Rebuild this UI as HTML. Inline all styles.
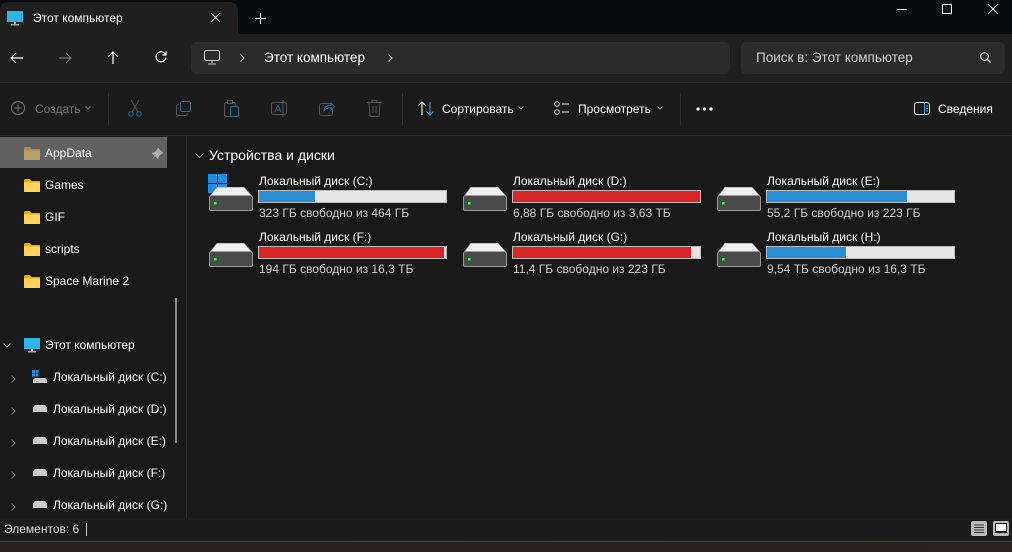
<!DOCTYPE html>
<html><head><meta charset="utf-8"><style>
*{margin:0;padding:0;box-sizing:border-box}
body{width:1012px;height:552px;overflow:hidden;background:#191919;font-family:"Segoe UI","Liberation Sans",sans-serif;color:#fff;font-size:12px;position:relative}
.a{position:absolute}
.t{white-space:nowrap}
svg{position:absolute;overflow:visible}
.bar{position:absolute;height:13px;width:189px;background:#e6e6e6;border:1px solid #bbb}
.bar i{display:block;height:100%}
.b{background:#2a8fd6}.r{background:#d82626}
.lbl{font-size:12px;color:#fff}
.sub{font-size:12px;color:#cfcfcf}
.sb{top:1px}
</style></head><body>
<div class="a" style="left:0;top:0;width:1012px;height:34px;background:#060b0d"></div>
<div class="a" style="left:0;top:2px;width:238px;height:32px;background:#1f1f1f;border-radius:8px 8px 0 0"></div>
<svg style="left:7px;top:11px" width="17" height="15"><rect x="0" y="0" width="16" height="11" fill="#2bb5e8"/><rect x="7" y="11" width="2" height="2" fill="#aaa"/><rect x="4" y="13" width="8" height="1.5" fill="#aaa"/></svg>
<div class="a t" style="left:33px;top:11px;font-size:12px">Этот компьютер</div>
<svg style="left:211px;top:13px" width="10" height="10"><path d="M0 0L9 9M9 0L0 9" stroke="#ddd" stroke-width="1.2"/></svg>
<svg style="left:255px;top:13px" width="11" height="11"><path d="M5.5 0V11M0 5.5H11" stroke="#ddd" stroke-width="1.2"/></svg>
<svg style="left:897px;top:9px" width="10" height="2"><path d="M0 0.5H10" stroke="#fff"/></svg>
<svg style="left:942px;top:4px" width="10" height="10"><rect x="0.5" y="0.5" width="9" height="9" fill="none" stroke="#fff"/></svg>
<svg style="left:988px;top:4px" width="10" height="10"><path d="M0 0L10 10M10 0L0 10" stroke="#fff"/></svg>
<div class="a" style="left:0;top:34px;width:1012px;height:48px;background:#1f1f1f"></div>
<svg style="left:10px;top:52px" width="14" height="12"><path d="M13 6H1M6 1L1 6L6 11" stroke="#fff" fill="none" stroke-width="1.2"/></svg>
<svg style="left:58px;top:52px" width="14" height="12"><path d="M1 6H13M8 1L13 6L8 11" stroke="#777" fill="none" stroke-width="1.2"/></svg>
<svg style="left:107px;top:51px" width="12" height="14"><path d="M6 13V1M1 6L6 1L11 6" stroke="#fff" fill="none" stroke-width="1.2"/></svg>
<svg style="left:155px;top:51px" width="12" height="12"><path d="M10.5 3.5A5 5 0 1 0 11 6.5M11 0.5V4H7.5" stroke="#fff" fill="none" stroke-width="1.2"/></svg>
<div class="a" style="left:191px;top:42px;width:539px;height:32px;background:#2b2b2b;border-radius:5px"></div>
<svg style="left:204px;top:50px" width="16" height="15"><rect x="0.5" y="0.5" width="15" height="10" rx="2" fill="none" stroke="#ccc" stroke-width="1.1"/><path d="M8 11V13M4 14H12" stroke="#ccc" stroke-width="1.1"/></svg>
<svg style="left:240px;top:54px" width="5" height="8"><path d="M0.5 0.5L4 4L0.5 7.5" stroke="#ddd" fill="none"/></svg>
<div class="a t" style="left:264px;top:50px;font-size:13.5px">Этот компьютер</div>
<svg style="left:388px;top:54px" width="5" height="8"><path d="M0.5 0.5L4 4L0.5 7.5" stroke="#ddd" fill="none"/></svg>
<div class="a" style="left:741px;top:42px;width:264px;height:32px;background:#2b2b2b;border-radius:5px"></div>
<div class="a t" style="left:756px;top:50px;font-size:13.5px;color:#cfcfcf">Поиск в: Этот компьютер</div>
<svg style="left:980px;top:52px" width="11" height="11"><circle cx="4.5" cy="4.5" r="3.8" fill="none" stroke="#ddd" stroke-width="1.2"/><path d="M7.3 7.3L10.5 10.5" stroke="#ddd" stroke-width="1.3"/></svg>
<div class="a" style="left:0;top:82px;width:1012px;height:1px;background:#2d2d2d"></div>
<div class="a" style="left:0;top:83px;width:1012px;height:52px;background:#1b1b1b"></div>
<div class="a" style="left:0;top:135px;width:1012px;height:1px;background:#2d2d2d"></div>
<svg style="left:11px;top:101px" width="14" height="14"><circle cx="7" cy="7" r="6.5" fill="none" stroke="#777"/><path d="M7 3.5V10.5M3.5 7H10.5" stroke="#777"/></svg>
<div class="a t" style="left:35px;top:102px;color:#777">Создать</div>
<svg style="left:85px;top:106px" width="6" height="4"><path d="M0.5 0.5L3 3L5.5 0.5" stroke="#777" fill="none"/></svg>
<div class="a" style="left:108px;top:93px;width:1px;height:32px;background:#2e2e2e"></div>
<svg style="left:128px;top:100px" width="14" height="17"><path d="M3 0L10 12M11 0L4 12" stroke="#555" fill="none"/><circle cx="3" cy="14" r="2.3" fill="none" stroke="#2a6b96"/><circle cx="11" cy="14" r="2.3" fill="none" stroke="#2a6b96"/></svg>
<svg style="left:176px;top:101px" width="15" height="15"><rect x="4.5" y="0.5" width="10" height="10" rx="2" fill="none" stroke="#2a6b96"/><path d="M2.5 3.5A2 2 0 0 0 0.5 5.5V12.5A2 2 0 0 0 2.5 14.5H9.5A2 2 0 0 0 11.5 12.5" fill="none" stroke="#555"/></svg>
<svg style="left:224px;top:100px" width="15" height="17"><rect x="0.5" y="2.5" width="11" height="14" rx="2" fill="none" stroke="#555"/><rect x="3.5" y="0.5" width="5" height="3" fill="#1b1b1b" stroke="#555"/><rect x="6.5" y="6.5" width="8" height="10" rx="1.5" fill="#1b1b1b" stroke="#2a6b96"/></svg>
<svg style="left:271px;top:100px" width="17" height="17"><rect x="0.5" y="2.5" width="15" height="12" rx="2" fill="none" stroke="#555"/><path d="M4 12L7 5L10 12M5 10H9" stroke="#2a6b96" fill="none"/><path d="M12 0V17" stroke="#555"/></svg>
<svg style="left:319px;top:100px" width="16" height="16"><rect x="0.5" y="3.5" width="13" height="12" rx="2" fill="none" stroke="#555"/><path d="M5 11C5 7 8 5.5 12 5.5V3L15.5 6.5L12 10V7.5C9 7.5 6.5 8.5 5 11Z" fill="#1b1b1b" stroke="#2a6b96"/></svg>
<svg style="left:367px;top:100px" width="15" height="17"><path d="M0 2.5H15M5 2.5V0.5H10V2.5M2 2.5L3 16.5H12L13 2.5M6 6V13M9 6V13" stroke="#555" fill="none"/></svg>
<div class="a" style="left:402px;top:93px;width:1px;height:32px;background:#2e2e2e"></div>
<svg style="left:418px;top:101px" width="16" height="15"><path d="M4 14V1M0.5 4.5L4 1L7.5 4.5" stroke="#fff" fill="none" stroke-width="1.1"/><path d="M12 1V14M8.5 10.5L12 14L15.5 10.5" stroke="#3aa0e8" fill="none" stroke-width="1.1"/></svg>
<div class="a t" style="left:442px;top:102px">Сортировать</div>
<svg style="left:518px;top:106px" width="6" height="4"><path d="M0.5 0.5L3 3L5.5 0.5" stroke="#aaa" fill="none"/></svg>
<svg style="left:554px;top:101px" width="16" height="14"><circle cx="3" cy="3" r="2.3" fill="none" stroke="#ddd"/><circle cx="3" cy="11" r="2.3" fill="none" stroke="#ddd"/><path d="M8 3H15M8 11H15" stroke="#ddd"/></svg>
<div class="a t" style="left:578px;top:102px">Просмотреть</div>
<svg style="left:657px;top:106px" width="6" height="4"><path d="M0.5 0.5L3 3L5.5 0.5" stroke="#aaa" fill="none"/></svg>
<div class="a" style="left:680px;top:93px;width:1px;height:32px;background:#2e2e2e"></div>
<svg style="left:696px;top:107px" width="18" height="4"><circle cx="2" cy="2" r="1.6" fill="#fff"/><circle cx="8.5" cy="2" r="1.6" fill="#fff"/><circle cx="15" cy="2" r="1.6" fill="#fff"/></svg>
<svg style="left:914px;top:102px" width="16" height="13"><rect x="0.5" y="0.5" width="15" height="12" rx="2.5" fill="none" stroke="#ddd"/><path d="M10.5 0.5V12.5" stroke="#3aa0e8"/><path d="M12 4H14M12 6.5H14M12 9H14" stroke="#3aa0e8"/></svg>
<div class="a t" style="left:938px;top:102px">Сведения</div>
<div class="a" style="left:0;top:137px;width:167px;height:31px;background:#616161"></div>
<div class="a" style="left:186px;top:136px;width:1px;height:382px;background:#2a2a2a"></div>
<div class="a" style="left:175px;top:298px;width:2px;height:145px;background:#888"></div>
<div class="a" style="left:0;top:1px;width:200px;height:520px">
<svg style="left:24px;top:146px" width="16" height="13"><path d="M0 1.5Q0 0 1.5 0H6L7.5 2H16V13H0Z" fill="#a88d4c"/><rect x="0" y="3.5" width="16" height="9.5" rx="1" fill="#b9a268"/></svg>
<div class="a t" style="left:45px;top:145px">AppData</div>
<svg style="left:152px;top:147px" width="11" height="11"><path d="M6 0L11 5L9 6L6.5 8.5L6 11L0 5L2.5 4.5L5 2Z M3 8L0 11" fill="#aaa" stroke="#aaa" stroke-width="0.5"/></svg>
<svg style="left:24px;top:178px" width="16" height="13"><path d="M0 1.5Q0 0 1.5 0H6L7.5 2H16V13H0Z" fill="#e6a914"/><rect x="0" y="3.5" width="16" height="9.5" rx="1" fill="#ffd35c"/></svg>
<div class="a t" style="left:45px;top:177px">Games</div>
<svg style="left:24px;top:210px" width="16" height="13"><path d="M0 1.5Q0 0 1.5 0H6L7.5 2H16V13H0Z" fill="#e6a914"/><rect x="0" y="3.5" width="16" height="9.5" rx="1" fill="#ffd35c"/></svg>
<div class="a t" style="left:45px;top:209px">GIF</div>
<svg style="left:24px;top:242px" width="16" height="13"><path d="M0 1.5Q0 0 1.5 0H6L7.5 2H16V13H0Z" fill="#e6a914"/><rect x="0" y="3.5" width="16" height="9.5" rx="1" fill="#ffd35c"/></svg>
<div class="a t" style="left:45px;top:241px">scripts</div>
<svg style="left:24px;top:274px" width="16" height="13"><path d="M0 1.5Q0 0 1.5 0H6L7.5 2H16V13H0Z" fill="#e6a914"/><rect x="0" y="3.5" width="16" height="9.5" rx="1" fill="#ffd35c"/></svg>
<div class="a t" style="left:45px;top:273px">Space Marine 2</div>
<svg style="left:3px;top:342px" width="8" height="5"><path d="M0.5 0.5L4 4L7.5 0.5" stroke="#aaa" fill="none"/></svg>
<svg style="left:24px;top:337px" width="17" height="15"><rect x="0" y="0" width="16" height="11" fill="#2bb5e8"/><rect x="7" y="11" width="2" height="2" fill="#aaa"/><rect x="4" y="13" width="8" height="1.5" fill="#aaa"/></svg>
<div class="a t" style="left:45px;top:337px">Этот компьютер</div>
</div>
<div class="a" style="left:0;top:370px">
<svg style="left:11px;top:5px" width="5" height="8"><path d="M0.5 0.5L4 4L0.5 7.5" stroke="#888" fill="none"/></svg>
<svg style="left:32px;top:0px" width="16" height="14"><rect x="0" y="0" width="3" height="3" fill="#2a8fd6"/><rect x="3.5" y="0" width="3" height="3" fill="#2a8fd6"/><rect x="0" y="3.5" width="3" height="3" fill="#2a8fd6"/><rect x="3.5" y="3.5" width="3" height="3" fill="#2a8fd6"/><path d="M3 8H13L15 10V13H1V10Z" fill="#ccc"/><rect x="4" y="11" width="1.5" height="1" fill="#3c3"/></svg>
<div class="a t" style="left:53px;top:0px">Локальный диск (C:)</div></div>
<div class="a" style="left:0;top:402px">
<svg style="left:11px;top:5px" width="5" height="8"><path d="M0.5 0.5L4 4L0.5 7.5" stroke="#888" fill="none"/></svg>
<svg style="left:32px;top:3px" width="16" height="8"><path d="M3 0H13L15 2.5V7H1V2.5Z" fill="#ccc"/><rect x="3" y="4.5" width="1.5" height="1" fill="#3c3"/></svg>
<div class="a t" style="left:53px;top:0px">Локальный диск (D:)</div></div>
<div class="a" style="left:0;top:434px">
<svg style="left:11px;top:5px" width="5" height="8"><path d="M0.5 0.5L4 4L0.5 7.5" stroke="#888" fill="none"/></svg>
<svg style="left:32px;top:3px" width="16" height="8"><path d="M3 0H13L15 2.5V7H1V2.5Z" fill="#ccc"/><rect x="3" y="4.5" width="1.5" height="1" fill="#3c3"/></svg>
<div class="a t" style="left:53px;top:0px">Локальный диск (E:)</div></div>
<div class="a" style="left:0;top:466px">
<svg style="left:11px;top:5px" width="5" height="8"><path d="M0.5 0.5L4 4L0.5 7.5" stroke="#888" fill="none"/></svg>
<svg style="left:32px;top:3px" width="16" height="8"><path d="M3 0H13L15 2.5V7H1V2.5Z" fill="#ccc"/><rect x="3" y="4.5" width="1.5" height="1" fill="#3c3"/></svg>
<div class="a t" style="left:53px;top:0px">Локальный диск (F:)</div></div>
<div class="a" style="left:0;top:498px">
<svg style="left:11px;top:5px" width="5" height="8"><path d="M0.5 0.5L4 4L0.5 7.5" stroke="#888" fill="none"/></svg>
<svg style="left:32px;top:3px" width="16" height="8"><path d="M3 0H13L15 2.5V7H1V2.5Z" fill="#ccc"/><rect x="3" y="4.5" width="1.5" height="1" fill="#3c3"/></svg>
<div class="a t" style="left:53px;top:0px">Локальный диск (G:)</div></div>
<svg style="left:195px;top:153px" width="9" height="5"><path d="M0.5 0.5L4.5 4.5L8.5 0.5" stroke="#aaa" fill="none"/></svg>
<div class="a t" style="left:209px;top:147px;font-size:14px">Устройства и диски</div>
<div class="a" style="left:208px;top:174px;width:240px;height:50px">
<svg style="left:0;top:0" width="20" height="20"><rect x="0" y="0" width="9" height="9" fill="#1e8fe0"/><rect x="10" y="0" width="9" height="9" fill="#1e8fe0"/><rect x="0" y="10" width="9" height="9" fill="#1e8fe0"/><rect x="10" y="10" width="9" height="9" fill="#1e8fe0"/></svg>
<svg style="left:1px;top:13px" width="44" height="24"><path d="M8 0.5H35L43.5 10V22A1.5 1.5 0 0 1 42 23.5H2A1.5 1.5 0 0 1 0.5 22V10Z" fill="#4a4a4a" stroke="#999"/><path d="M8 0.5H35L42 8.5H2Z" fill="#f0f0f0"/><rect x="5" y="15" width="2.5" height="2.5" fill="#3f3"/></svg>
<div class="a t lbl" style="left:51px;top:0px">Локальный диск (C:)</div>
<div class="bar" style="left:50px;top:16px"><i class="b" style="width:30%"></i></div>
<div class="a t sub" style="left:51px;top:32px">323 ГБ свободно из 464 ГБ</div></div>
<div class="a" style="left:462px;top:174px;width:240px;height:50px">
<svg style="left:1px;top:13px" width="44" height="24"><path d="M8 0.5H35L43.5 10V22A1.5 1.5 0 0 1 42 23.5H2A1.5 1.5 0 0 1 0.5 22V10Z" fill="#4a4a4a" stroke="#999"/><path d="M8 0.5H35L42 8.5H2Z" fill="#f0f0f0"/><rect x="5" y="15" width="2.5" height="2.5" fill="#3f3"/></svg>
<div class="a t lbl" style="left:51px;top:0px">Локальный диск (D:)</div>
<div class="bar" style="left:50px;top:16px"><i class="r" style="width:100%"></i></div>
<div class="a t sub" style="left:51px;top:32px">6,88 ГБ свободно из 3,63 ТБ</div></div>
<div class="a" style="left:716px;top:174px;width:240px;height:50px">
<svg style="left:1px;top:13px" width="44" height="24"><path d="M8 0.5H35L43.5 10V22A1.5 1.5 0 0 1 42 23.5H2A1.5 1.5 0 0 1 0.5 22V10Z" fill="#4a4a4a" stroke="#999"/><path d="M8 0.5H35L42 8.5H2Z" fill="#f0f0f0"/><rect x="5" y="15" width="2.5" height="2.5" fill="#3f3"/></svg>
<div class="a t lbl" style="left:51px;top:0px">Локальный диск (E:)</div>
<div class="bar" style="left:50px;top:16px"><i class="b" style="width:75%"></i></div>
<div class="a t sub" style="left:51px;top:32px">55,2 ГБ свободно из 223 ГБ</div></div>
<div class="a" style="left:208px;top:230px;width:240px;height:50px">
<svg style="left:1px;top:13px" width="44" height="24"><path d="M8 0.5H35L43.5 10V22A1.5 1.5 0 0 1 42 23.5H2A1.5 1.5 0 0 1 0.5 22V10Z" fill="#4a4a4a" stroke="#999"/><path d="M8 0.5H35L42 8.5H2Z" fill="#f0f0f0"/><rect x="5" y="15" width="2.5" height="2.5" fill="#3f3"/></svg>
<div class="a t lbl" style="left:51px;top:0px">Локальный диск (F:)</div>
<div class="bar" style="left:50px;top:16px"><i class="r" style="width:99%"></i></div>
<div class="a t sub" style="left:51px;top:32px">194 ГБ свободно из 16,3 ТБ</div></div>
<div class="a" style="left:462px;top:230px;width:240px;height:50px">
<svg style="left:1px;top:13px" width="44" height="24"><path d="M8 0.5H35L43.5 10V22A1.5 1.5 0 0 1 42 23.5H2A1.5 1.5 0 0 1 0.5 22V10Z" fill="#4a4a4a" stroke="#999"/><path d="M8 0.5H35L42 8.5H2Z" fill="#f0f0f0"/><rect x="5" y="15" width="2.5" height="2.5" fill="#3f3"/></svg>
<div class="a t lbl" style="left:51px;top:0px">Локальный диск (G:)</div>
<div class="bar" style="left:50px;top:16px"><i class="r" style="width:95%"></i></div>
<div class="a t sub" style="left:51px;top:32px">11,4 ГБ свободно из 223 ГБ</div></div>
<div class="a" style="left:716px;top:230px;width:240px;height:50px">
<svg style="left:1px;top:13px" width="44" height="24"><path d="M8 0.5H35L43.5 10V22A1.5 1.5 0 0 1 42 23.5H2A1.5 1.5 0 0 1 0.5 22V10Z" fill="#4a4a4a" stroke="#999"/><path d="M8 0.5H35L42 8.5H2Z" fill="#f0f0f0"/><rect x="5" y="15" width="2.5" height="2.5" fill="#3f3"/></svg>
<div class="a t lbl" style="left:51px;top:0px">Локальный диск (H:)</div>
<div class="bar" style="left:50px;top:16px"><i class="b" style="width:42%"></i></div>
<div class="a t sub" style="left:51px;top:32px">9,54 ТБ свободно из 16,3 ТБ</div></div>
<div class="a" style="left:0;top:518px;width:1012px;height:23px;background:#1c1c1c"></div>
<div class="a t" style="left:4px;top:522px;font-size:12px;color:#ddd">Элементов: 6</div>
<div class="a" style="left:86px;top:523px;width:1px;height:13px;background:#ccc"></div>
<div class="a" style="left:971px;top:521px;width:16px;height:15px;background:#bbb;border-radius:2px"></div>
<svg style="left:974px;top:524px" width="10" height="9"><path d="M0 1H10M0 3.5H10M0 6H10M0 8.5H10" stroke="#333"/></svg>
<div class="a" style="left:993px;top:521px;width:16px;height:15px;background:#bbb;border-radius:2px"></div>
<div class="a" style="left:995px;top:523px;width:12px;height:10px;background:#fff;border:1px solid #111;border-bottom-width:2px"></div>
<div class="a" style="left:0;top:541px;width:1012px;height:1px;background:#444"></div>
<div class="a" style="left:0;top:542px;width:1012px;height:10px;background:linear-gradient(90deg,#2a2220,#25201e 50%,#2a2420)"></div>
</body></html>
